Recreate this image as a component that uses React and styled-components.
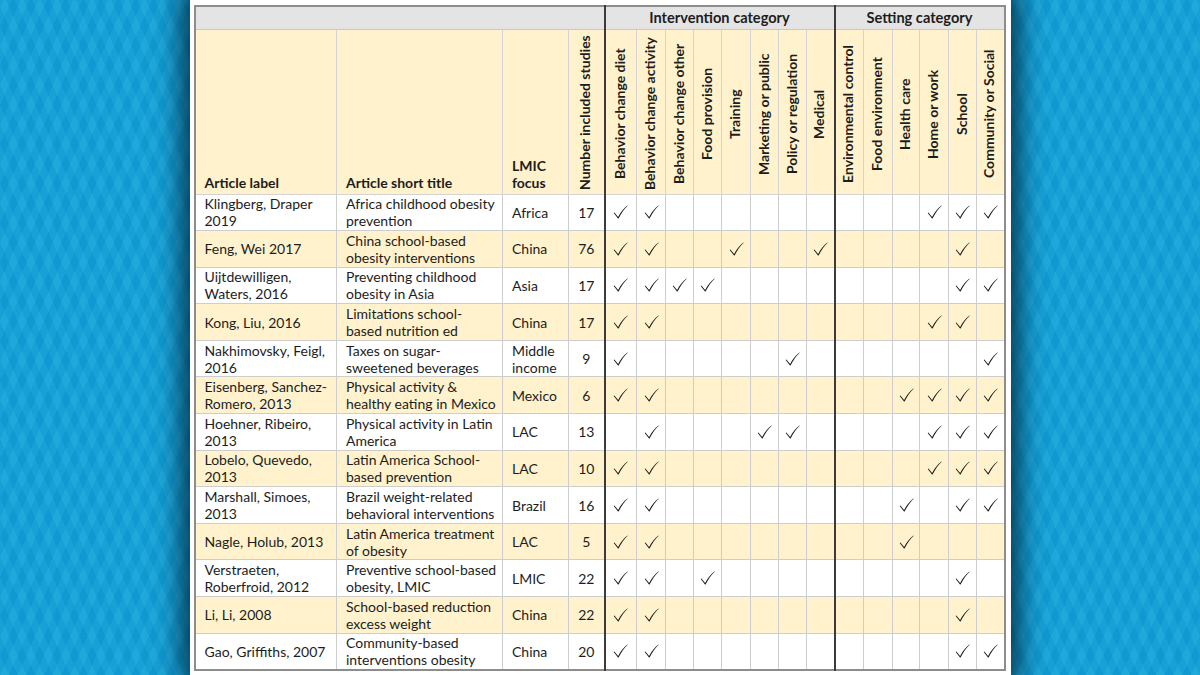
import styled, { createGlobalStyle } from "styled-components";

const GlobalStyle = createGlobalStyle`
  html, body {
    margin: 0;
    padding: 0;
  }
  body {
    background-color: #10a2d9;
    background-image:
      repeating-linear-gradient(66deg, rgba(255, 255, 255, 0.035) 0 8px, rgba(0, 50, 100, 0.04) 8px 16px),
      repeating-linear-gradient(-66deg, rgba(255, 255, 255, 0.035) 0 8px, rgba(0, 50, 100, 0.04) 8px 16px);
    font-family: Lato, "Liberation Sans", sans-serif;
    color: #1d1d1d;
  }
`;

const Stage = styled.div`
  height: 675px;
  display: flex;
  justify-content: center;
  overflow: hidden;
`;

const Panel = styled.div`
  width: 821px;
  height: 675px;
  box-sizing: border-box;
  padding: 5px 7px 0 4px;
  background: #ffffff;
  box-shadow: 0 0 24px 9px rgba(3, 48, 70, 0.92);
`;

const Table = styled.table`
  width: 810px;
  table-layout: fixed;
  border-collapse: collapse;
  border: 2px solid #8d8d8d;
  font-size: 14px;
  line-height: 17px;
`;

const Col = styled.col`
  width: ${(p) => p.$w}px;
`;

const GroupRow = styled.tr`
  height: 23px;
  background: #e4e4e4;
`;

const GroupCell = styled.th`
  font-weight: 700;
  font-size: 14.6px;
  text-align: center;
  padding: 0;
  border-bottom: 1px solid #c9c9c9;
  border-left: ${(p) => (p.$group ? "2px solid #3b3b3b" : "none")};
`;

const HeadRow = styled.tr`
  height: 165px;
  background: #fff2cc;
`;

const HeadCell = styled.th`
  font-weight: 700;
  text-align: left;
  vertical-align: bottom;
  padding: 0 6px 3px 9px;
  border: 1px solid #d3d3d3;
`;

const VerticalCell = styled.th`
  font-weight: 700;
  vertical-align: bottom;
  padding: 0 0 4px 0;
  border: 1px solid #d3d3d3;
  border-left: ${(p) => (p.$group ? "2px solid #3b3b3b" : "1px solid #d3d3d3")};
`;

const VerticalLabel = styled.div`
  writing-mode: vertical-rl;
  transform: rotate(180deg);
  white-space: nowrap;
  height: 152px;
  line-height: 1;
  margin: 0 auto;
  padding-left: 2px;
`;

const Row = styled.tr`
  height: 36.6px;
  background: ${(p) => (p.$alt ? "#fff2cc" : "#ffffff")};
`;

const TextCell = styled.td`
  padding: 0 4px 0 9px;
  vertical-align: middle;
  white-space: nowrap;
  border: 1px solid #cdcdcd;
`;

const NumberCell = styled.td`
  padding: 0;
  text-align: center;
  vertical-align: middle;
  border: 1px solid #cdcdcd;
`;

const CheckCell = styled.td`
  padding: 0;
  text-align: center;
  vertical-align: middle;
  border: 1px solid #cdcdcd;
  border-left: ${(p) => (p.$group ? "2px solid #3b3b3b" : "1px solid #cdcdcd")};
  line-height: 0;
`;

const CheckMark = styled.svg`
  width: 15px;
  height: 14px;
  display: inline-block;
  fill: #1c1c1c;
`;

function Check() {
  return (
    <CheckMark viewBox="0 0 15 14">
      <path d="M0.7 8.0 L1.4 7.5 L5.1 12.0 C7.7 6.9 10.7 3.1 14.5 0.4 L14.8 0.8 C11.3 3.9 8.3 8.3 5.6 13.5 L5.0 13.5 Z" />
    </CheckMark>
  );
}

const widths = [142, 166, 66, 36, 32, 29, 28, 28, 29, 28, 28, 28, 29, 29, 27, 29, 28, 28];

const intervention = [
  "Behavior change diet",
  "Behavior change activity",
  "Behavior change other",
  "Food provision",
  "Training",
  "Marketing or public",
  "Policy or regulation",
  "Medical",
];

const setting = [
  "Environmental control",
  "Food environment",
  "Health care",
  "Home or work",
  "School",
  "Community or Social",
];

const rows = [
  { label: ["Klingberg, Draper", "2019"], title: ["Africa childhood obesity", "prevention"], focus: ["Africa"], n: 17, i: [1, 2], s: [4, 5, 6] },
  { label: ["Feng, Wei 2017"], title: ["China school-based", "obesity interventions"], focus: ["China"], n: 76, i: [1, 2, 5, 8], s: [5] },
  { label: ["Uijtdewilligen,", "Waters, 2016"], title: ["Preventing childhood", "obesity in Asia"], focus: ["Asia"], n: 17, i: [1, 2, 3, 4], s: [5, 6] },
  { label: ["Kong, Liu, 2016"], title: ["Limitations school-", "based nutrition ed"], focus: ["China"], n: 17, i: [1, 2], s: [4, 5] },
  { label: ["Nakhimovsky, Feigl,", "2016"], title: ["Taxes on sugar-", "sweetened beverages"], focus: ["Middle", "income"], n: 9, i: [1, 7], s: [6] },
  { label: ["Eisenberg, Sanchez-", "Romero, 2013"], title: ["Physical activity &", "healthy eating in Mexico"], focus: ["Mexico"], n: 6, i: [1, 2], s: [3, 4, 5, 6] },
  { label: ["Hoehner, Ribeiro,", "2013"], title: ["Physical activity in Latin", "America"], focus: ["LAC"], n: 13, i: [2, 6, 7], s: [4, 5, 6] },
  { label: ["Lobelo, Quevedo,", "2013"], title: ["Latin America School-", "based prevention"], focus: ["LAC"], n: 10, i: [1, 2], s: [4, 5, 6] },
  { label: ["Marshall, Simoes,", "2013"], title: ["Brazil weight-related", "behavioral interventions"], focus: ["Brazil"], n: 16, i: [1, 2], s: [3, 5, 6] },
  { label: ["Nagle, Holub, 2013"], title: ["Latin America treatment", "of obesity"], focus: ["LAC"], n: 5, i: [1, 2], s: [3] },
  { label: ["Verstraeten,", "Roberfroid, 2012"], title: ["Preventive school-based", "obesity, LMIC"], focus: ["LMIC"], n: 22, i: [1, 2, 4], s: [5] },
  { label: ["Li, Li, 2008"], title: ["School-based reduction", "excess weight"], focus: ["China"], n: 22, i: [1, 2], s: [5] },
  { label: ["Gao, Griffiths, 2007"], title: ["Community-based", "interventions obesity"], focus: ["China"], n: 20, i: [1, 2], s: [5, 6] },
];

function Lines({ items }) {
  return items.map((line, k) => (
    <span key={k}>
      {k > 0 && <br />}
      {line}
    </span>
  ));
}

export default function App() {
  return (
    <Stage>
      <GlobalStyle />
      <Panel>
        <Table>
          <colgroup>
            {widths.map((w, k) => (
              <Col key={k} $w={w} />
            ))}
          </colgroup>
          <thead>
            <GroupRow>
              <GroupCell colSpan={4} />
              <GroupCell colSpan={8} $group>
                Intervention category
              </GroupCell>
              <GroupCell colSpan={6} $group>
                Setting category
              </GroupCell>
            </GroupRow>
            <HeadRow>
              <HeadCell>Article label</HeadCell>
              <HeadCell>Article short title</HeadCell>
              <HeadCell>
                LMIC
                <br />
                focus
              </HeadCell>
              <VerticalCell>
                <VerticalLabel>Number included studies</VerticalLabel>
              </VerticalCell>
              {intervention.map((name, k) => (
                <VerticalCell key={name} $group={k === 0}>
                  <VerticalLabel>{name}</VerticalLabel>
                </VerticalCell>
              ))}
              {setting.map((name, k) => (
                <VerticalCell key={name} $group={k === 0}>
                  <VerticalLabel>{name}</VerticalLabel>
                </VerticalCell>
              ))}
            </HeadRow>
          </thead>
          <tbody>
            {rows.map((r, idx) => (
              <Row key={idx} $alt={idx % 2 === 1}>
                <TextCell>
                  <Lines items={r.label} />
                </TextCell>
                <TextCell>
                  <Lines items={r.title} />
                </TextCell>
                <TextCell>
                  <Lines items={r.focus} />
                </TextCell>
                <NumberCell>{r.n}</NumberCell>
                {intervention.map((name, k) => (
                  <CheckCell key={name} $group={k === 0}>
                    {r.i.includes(k + 1) && <Check />}
                  </CheckCell>
                ))}
                {setting.map((name, k) => (
                  <CheckCell key={name} $group={k === 0}>
                    {r.s.includes(k + 1) && <Check />}
                  </CheckCell>
                ))}
              </Row>
            ))}
          </tbody>
        </Table>
      </Panel>
    </Stage>
  );
}
